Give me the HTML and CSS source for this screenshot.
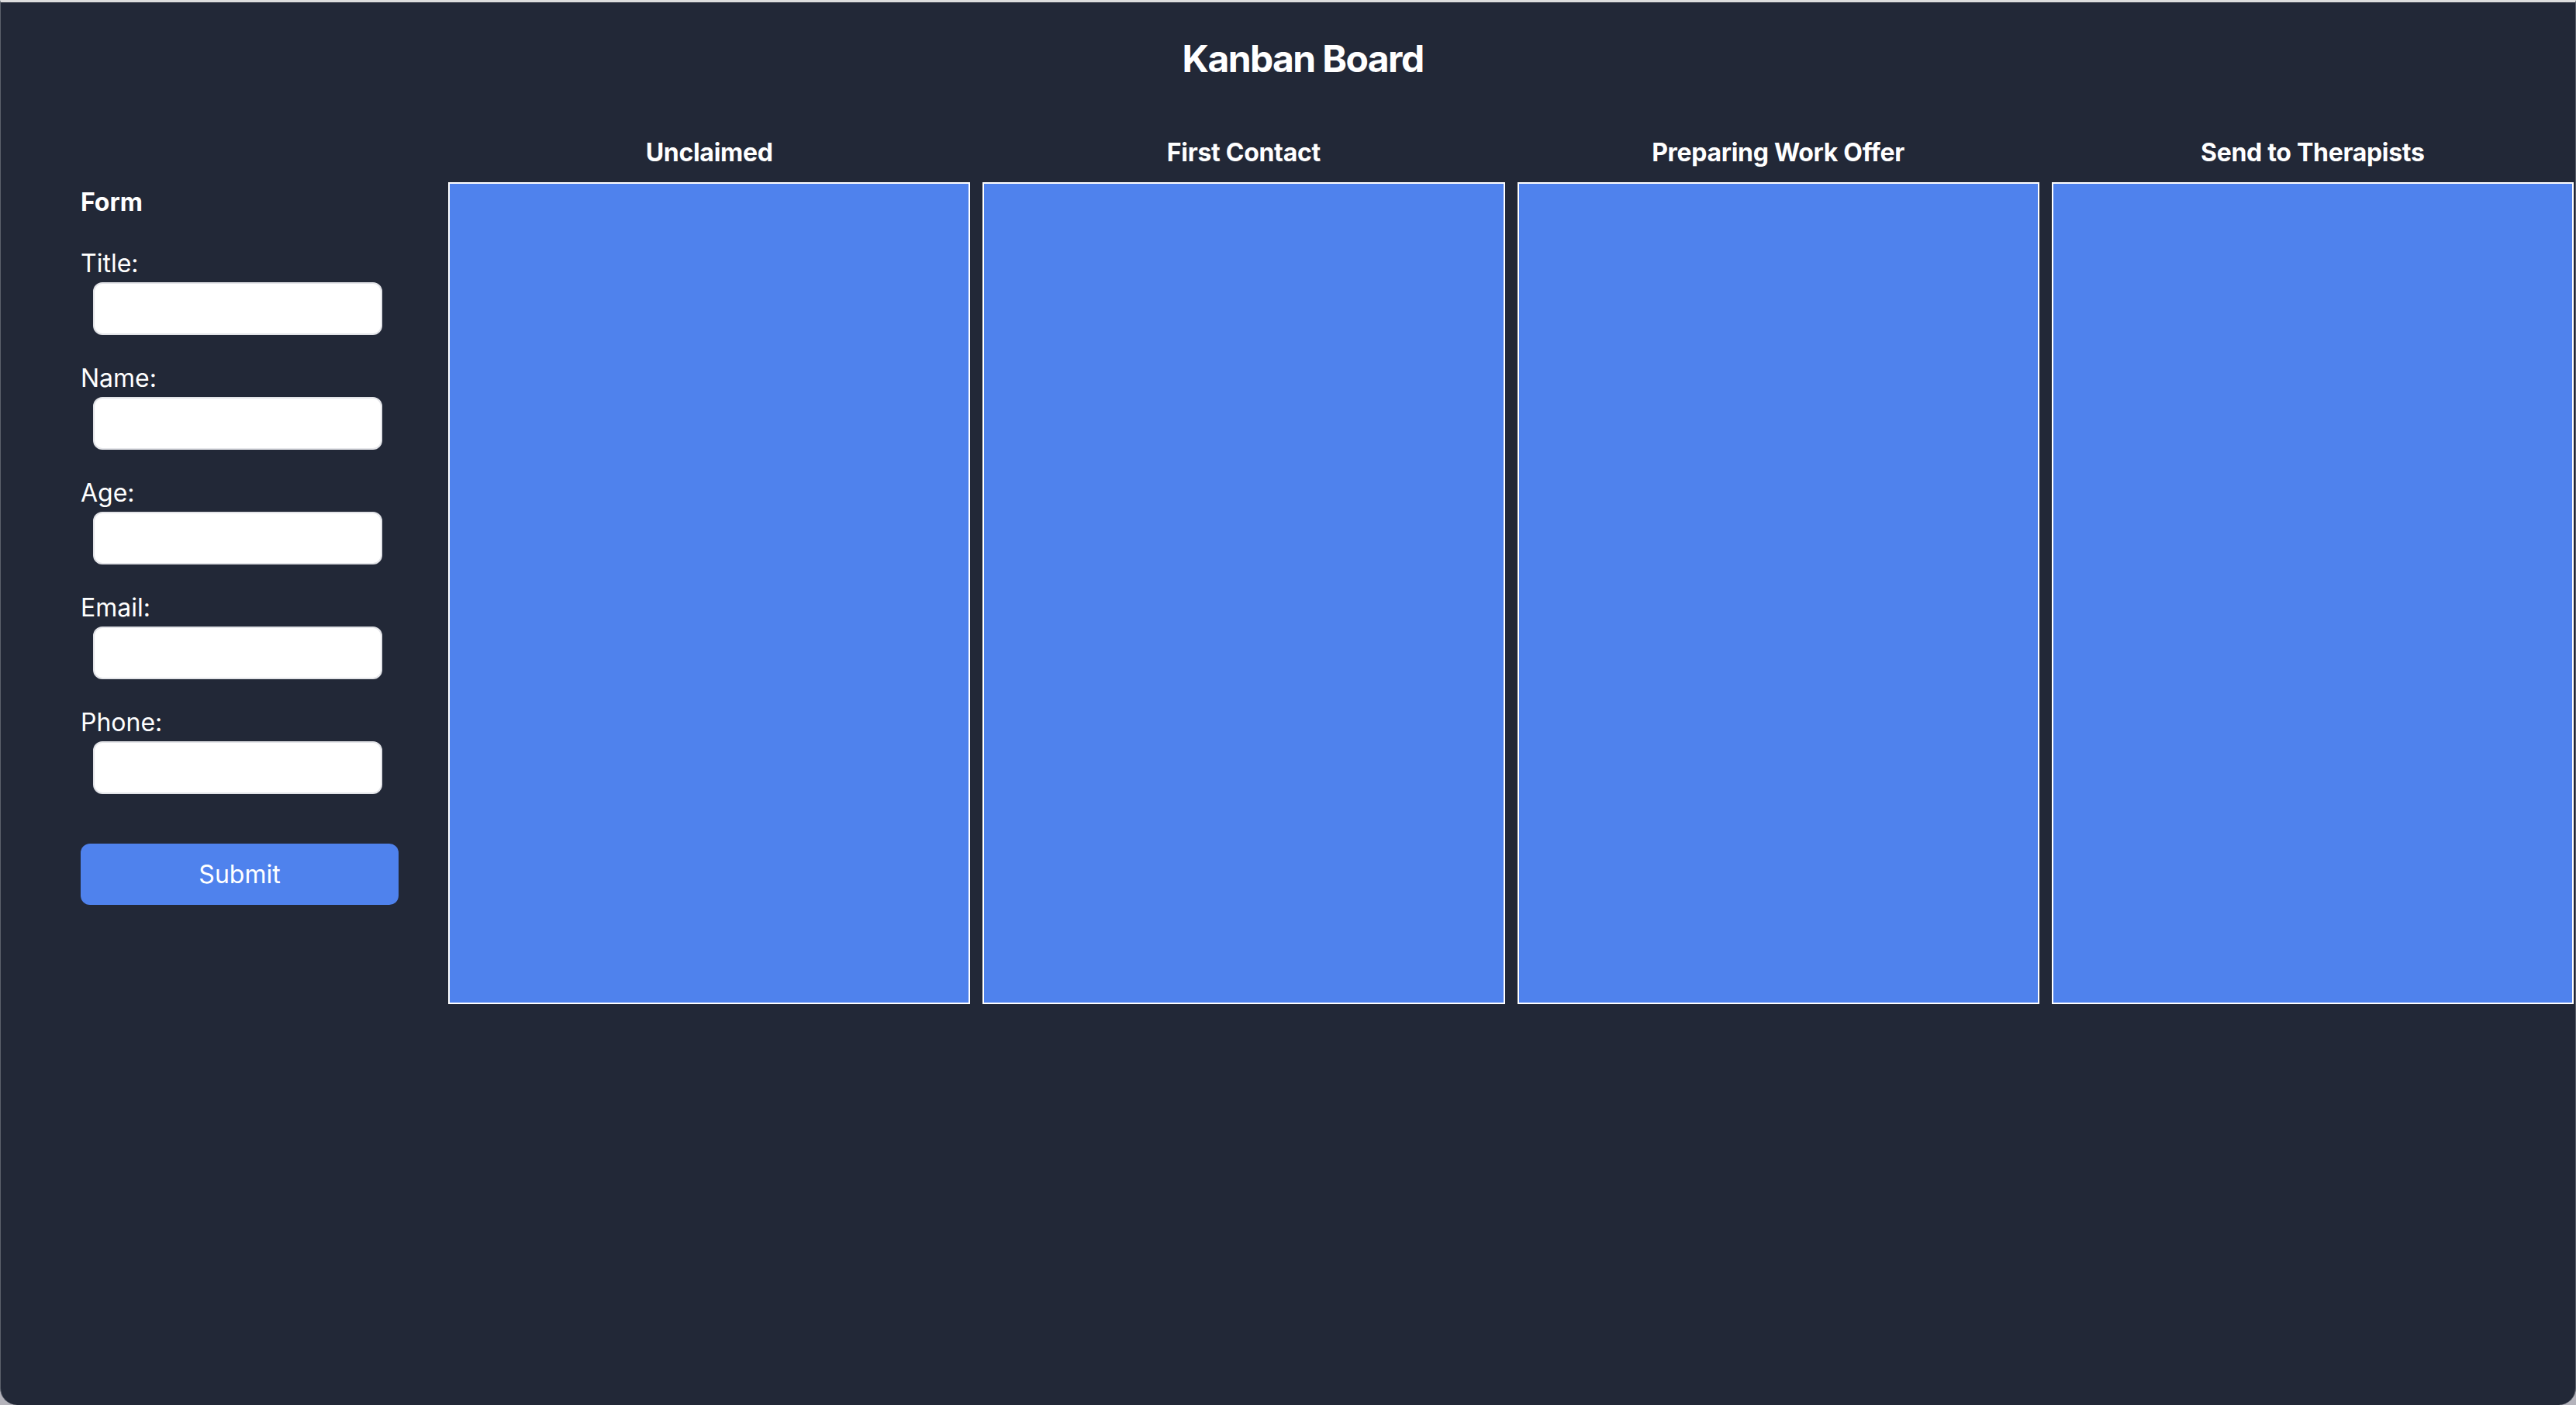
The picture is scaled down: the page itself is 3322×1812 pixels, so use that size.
FILE: index.html
```html
<!DOCTYPE html>
<html lang="en">
<head>
<meta charset="utf-8">
<title>Kanban Board</title>
<link rel="stylesheet" href="styles.css">
</head>
<body>
<div class="window">
  <h1 class="page-title">Kanban Board</h1>
  <div class="main">
    <form class="card-form">
      <h3 class="form-title">Form</h3>
      <div class="field">
        <label class="field-label">Title:</label>
        <input class="field-input" type="text">
      </div>
      <div class="field">
        <label class="field-label">Name:</label>
        <input class="field-input" type="text">
      </div>
      <div class="field">
        <label class="field-label">Age:</label>
        <input class="field-input" type="text">
      </div>
      <div class="field">
        <label class="field-label">Email:</label>
        <input class="field-input" type="text">
      </div>
      <div class="field">
        <label class="field-label">Phone:</label>
        <input class="field-input" type="text">
      </div>
      <button class="submit-btn" type="button">Submit</button>
    </form>
    <div class="board">
      <div class="column">
        <h2 class="column-title">Unclaimed</h2>
        <div class="column-body"></div>
      </div>
      <div class="column">
        <h2 class="column-title">First Contact</h2>
        <div class="column-body"></div>
      </div>
      <div class="column">
        <h2 class="column-title">Preparing Work Offer</h2>
        <div class="column-body"></div>
      </div>
      <div class="column">
        <h2 class="column-title">Send to Therapists</h2>
        <div class="column-body"></div>
      </div>
    </div>
  </div>
</div>
</body>
</html>
```

FILE: styles.css
```css
* {
  box-sizing: border-box;
}

html, body {
  margin: 0;
  padding: 0;
  background: #b4b3bb;
}

body {
  width: 3322px;
  height: 1812px;
  overflow: hidden;
  font-family: Inter, "Noto Sans", "Liberation Sans", sans-serif;
  color: #ffffff;
}

.window {
  width: 3322px;
  height: 1812px;
  background: #222837;
  border-top: 3px solid #dedede;
  border-left: 1px solid #5b606b;
  border-right: 1px solid #5b606b;
  border-radius: 0 0 22px 22px;
  display: flex;
  flex-direction: column;
}

.page-title {
  margin: 44px 0 72px 0;
  padding-left: 38px;
  font-size: 48px;
  line-height: 58px;
  font-weight: 700;
  text-align: center;
  letter-spacing: -1.6px;
}

.main {
  display: flex;
  align-items: flex-start;
  gap: 64px;
  padding-left: 103px;
  padding-right: 2px;
}

.card-form {
  width: 410px;
  flex: none;
  margin: 64px 0 0 0;
  display: flex;
  flex-direction: column;
}

.form-title {
  margin: 0 0 39px 0;
  font-size: 32px;
  line-height: 40px;
  font-weight: 700;
}

.field {
  display: flex;
  flex-direction: column;
  margin-bottom: 36px;
}

.field-label {
  font-size: 32px;
  line-height: 40px;
  font-weight: 400;
  margin-bottom: 4px;
}

.field-input {
  margin-left: 16px;
  width: 373px;
  height: 68px;
  background: #ffffff;
  border: 2px solid #e3e4e8;
  border-radius: 12px;
  outline: none;
  font-size: 32px;
  font-family: inherit;
}

.submit-btn {
  margin-top: 28px;
  width: 410px;
  height: 79px;
  border: none;
  border-radius: 12px;
  background: #4f82ed;
  color: #ffffff;
  font-family: inherit;
  font-size: 32px;
  font-weight: 400;
}

.board {
  flex: 1;
  display: flex;
  gap: 16px;
}

.column {
  flex: 1;
  display: flex;
  flex-direction: column;
}

.column-title {
  margin: 0 0 18px 0;
  font-size: 32px;
  line-height: 40px;
  font-weight: 700;
  text-align: center;
  letter-spacing: -0.3px;
}

.column-body {
  height: 1060px;
  background: #4f82ed;
  border: 2px solid #ffffff;
}
```
